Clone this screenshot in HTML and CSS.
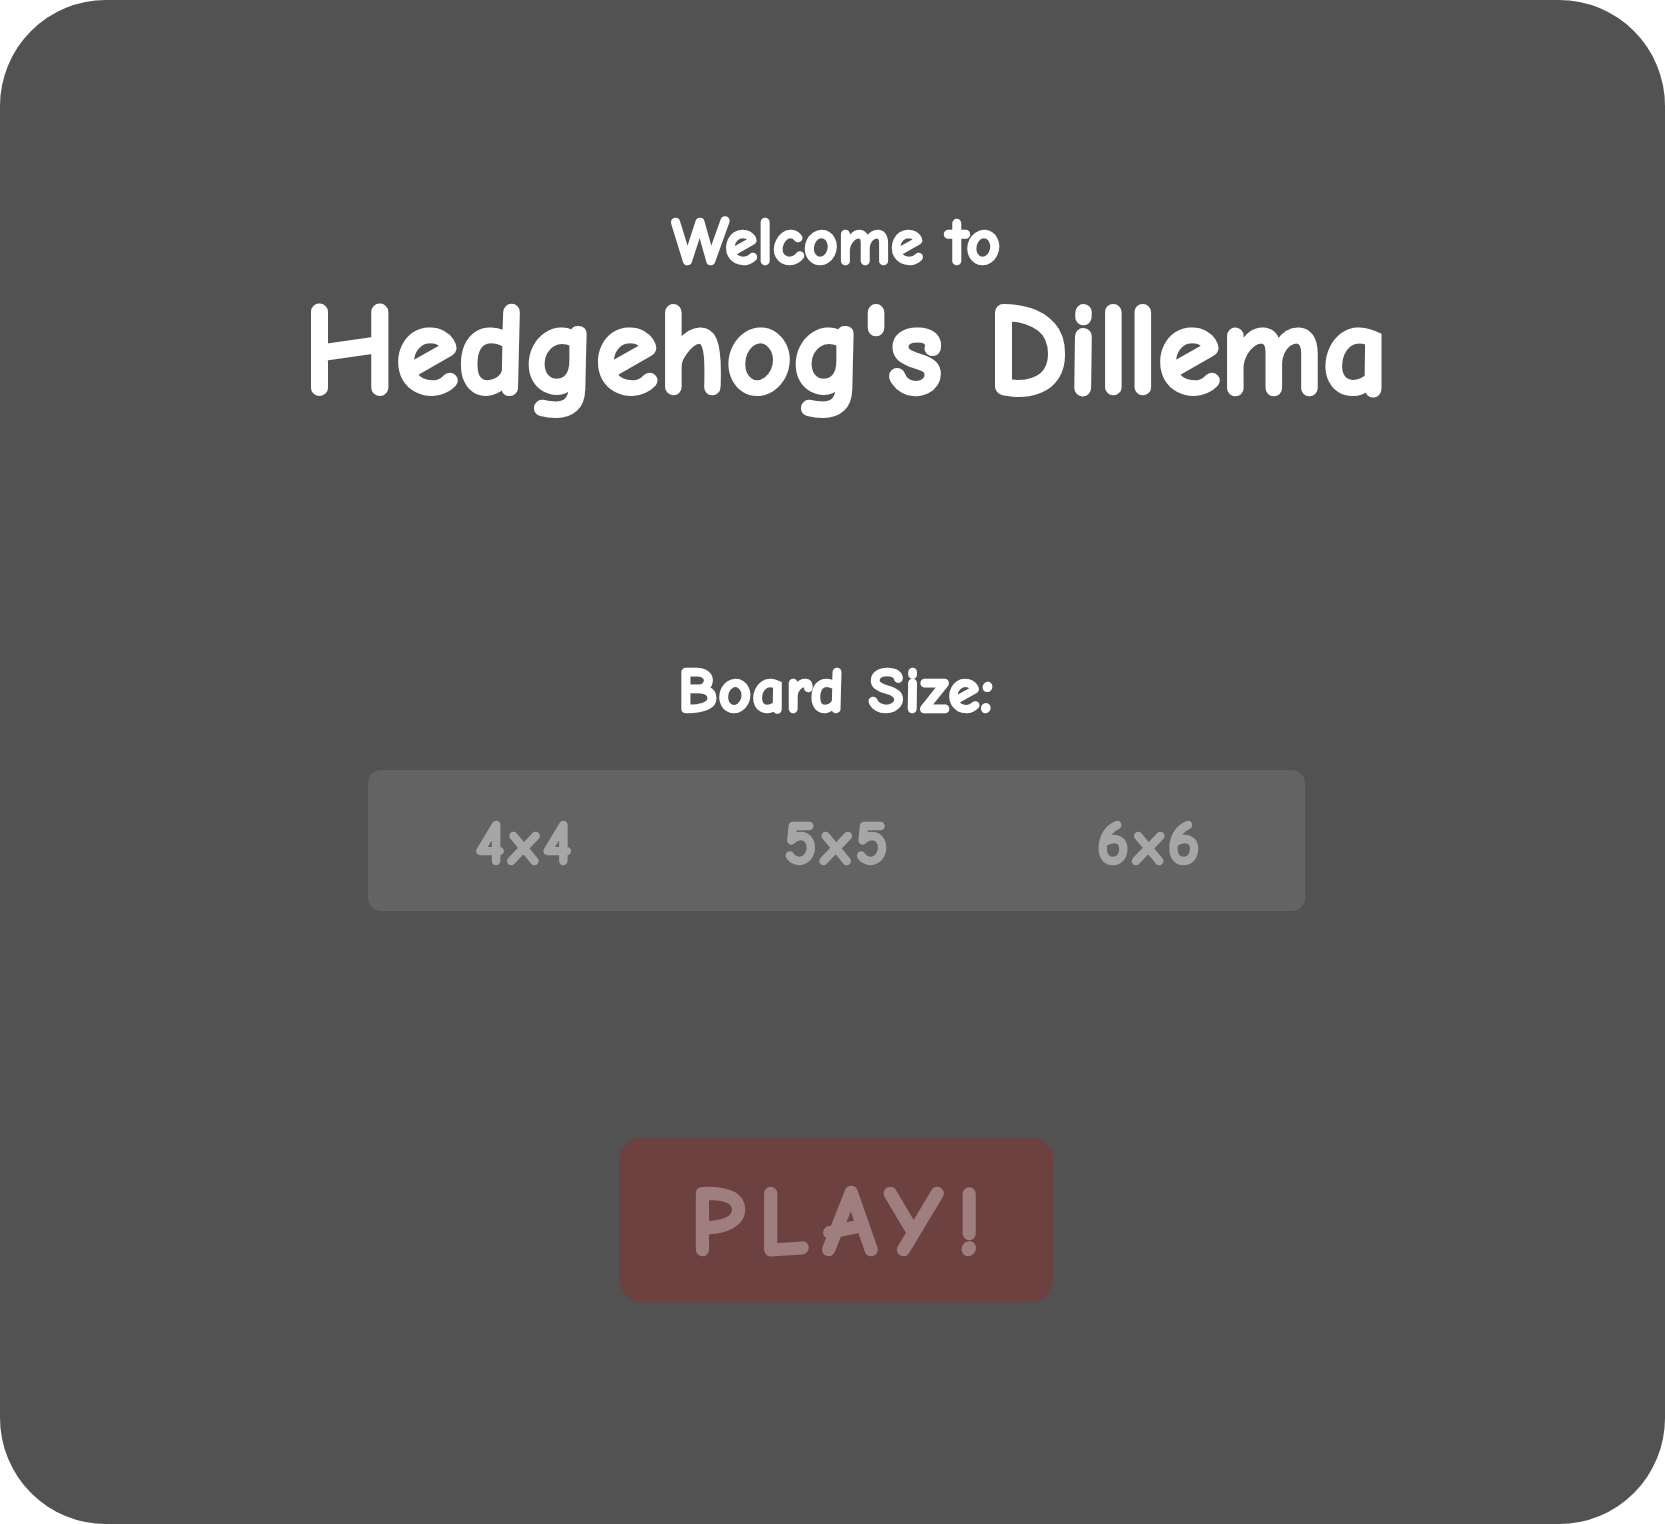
FILE: index.html
```html
<!DOCTYPE html>
<html lang="en">
<head>
<meta charset="utf-8">
<title>Hedgehog's Dillema</title>
<link rel="stylesheet" href="styles.css">
</head>
<body>
<main class="card">
  <header class="heading">
    <div class="welcome">Welcome to</div>
    <h1 class="title">Hedgehog's Dillema</h1>
  </header>
  <section class="board">
    <div class="board-label">Board Size:</div>
    <div class="options">
      <button class="option">4x4</button>
      <button class="option">5x5</button>
      <button class="option">6x6</button>
    </div>
  </section>
  <button class="play">PLAY!</button>
</main>
</body>
</html>
```
FILE: styles.css
```css
html, body {
  margin: 0;
  padding: 0;
  background: #ffffff;
}

.card {
  box-sizing: border-box;
  width: 1665px;
  height: 1524px;
  background: #525252;
  border-radius: 106px;
  display: flex;
  flex-direction: column;
  align-items: center;
  padding-top: 209px;
  padding-left: 7px;
  font-family: "Comic Sans MS", "Comic Neue", Lato, "Noto Sans", sans-serif;
  font-weight: 700;
  color: #ffffff;
}

.heading {
  display: flex;
  flex-direction: column;
  align-items: center;
}

.welcome {
  font-size: 67px;
  line-height: 1;
  -webkit-text-stroke: 2.5px currentColor;
  letter-spacing: -0.5px;
}

.title {
  margin: 10px 0 0;
  padding-left: 19px;
  font-size: 130px;
  line-height: 1;
  font-weight: 700;
  -webkit-text-stroke: 4px currentColor;
  letter-spacing: -1px;
}

.board {
  margin-top: 243px;
  display: flex;
  flex-direction: column;
  align-items: center;
}

.board-label {
  font-size: 65px;
  line-height: 1;
  -webkit-text-stroke: 2.5px currentColor;
  letter-spacing: 0.5px;
}

.options {
  margin-top: 46px;
  width: 937px;
  height: 141px;
  background: #636363;
  border-radius: 13px;
  display: grid;
  grid-template-columns: repeat(3, 1fr);
}

.option {
  border: 0;
  background: transparent;
  font: inherit;
  font-size: 62px;
  line-height: 1;
  color: #a6a6a6;
  -webkit-text-stroke: 2.5px currentColor;
  letter-spacing: 4px;
  padding: 6px 0 0 4px;
  display: flex;
  align-items: center;
  justify-content: center;
}

.play {
  margin-top: 227px;
  width: 434px;
  height: 163px;
  border: 0;
  border-radius: 21px;
  background: #6e4141;
  color: #9e7e7e;
  font: inherit;
  font-size: 98px;
  line-height: 1;
  letter-spacing: 14px;
  padding: 7px 0 0 14px;
  -webkit-text-stroke: 3.5px currentColor;
}
```
